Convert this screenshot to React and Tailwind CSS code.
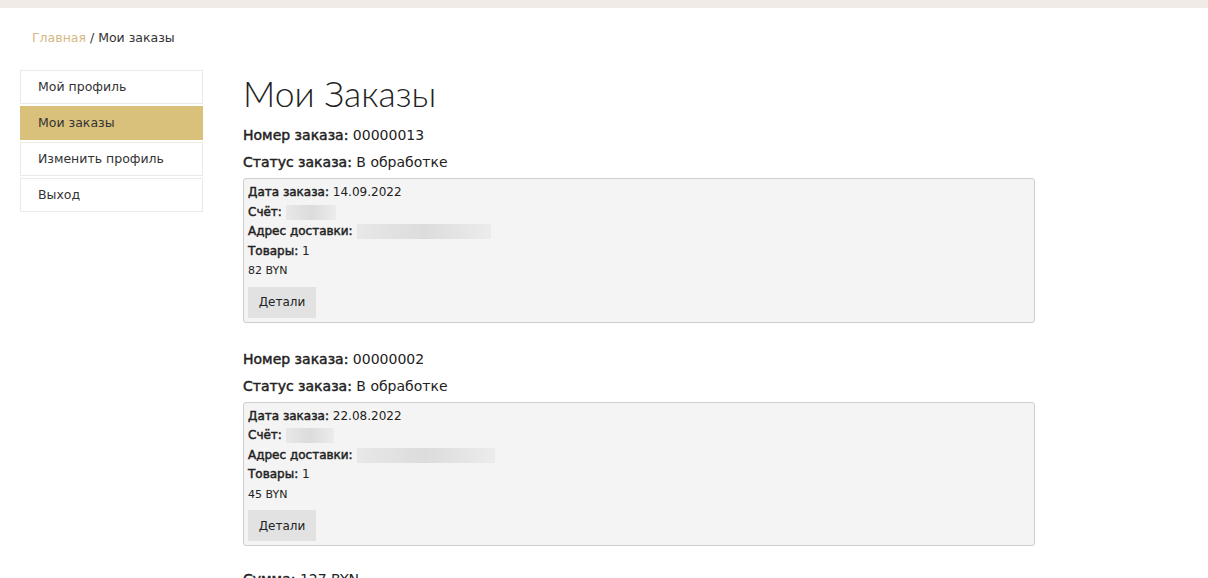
import React from 'react';

const font = { fontFamily: '"DejaVu Sans", "Noto Sans", sans-serif' };
const light = { fontFamily: '"Lato", "Noto Sans", sans-serif' };

const menu = [
  { label: 'Мой профиль' },
  { label: 'Мои заказы', active: true },
  { label: 'Изменить профиль' },
  { label: 'Выход' },
];

const orders = [
  { num: '00000013', date: '14.09.2022', total: '82 BYN', bill: 'w-[50px]', addr: 'w-[134px]' },
  { num: '00000002', date: '22.08.2022', total: '45 BYN', bill: 'w-[48px]', addr: 'w-[138px]' },
];

function Blur({ w }) {
  return (
    <span className={`inline-block h-[15px] align-middle ${w} bg-gradient-to-r from-[#e8e8e8] via-[#dcdcdc] to-[#ececec]`} />
  );
}

function Label({ children }) {
  return <span className="[-webkit-text-stroke:0.45px_#222]">{children}</span>;
}

function Order({ o }) {
  return (
    <div className="mb-[23px]">
      <div className="text-[14px] leading-[27px] text-[#222]">
        <Label>Номер заказа:</Label> {o.num}
      </div>
      <div className="text-[14px] leading-[27px] text-[#222]">
        <Label>Статус заказа:</Label> В обработке
      </div>
      <div className="mt-[2px] w-[792px] bg-[#f4f4f4] border border-[#cdcdcd] rounded-[3px] pl-[4px] pt-[4px] pb-[4px] text-[12px] text-[#222]">
        <div className="leading-[19.5px]"><Label>Дата заказа:</Label> {o.date}</div>
        <div className="leading-[19.5px]"><Label>Счёт:</Label> <Blur w={o.bill} /></div>
        <div className="leading-[19.5px]"><Label>Адрес доставки:</Label> <Blur w={o.addr} /></div>
        <div className="leading-[19.5px]"><Label>Товары:</Label> 1</div>
        <div className="leading-[19.5px] text-[11px]">{o.total}</div>
        <button className="mt-[6px] w-[68px] h-[31px] bg-[#e2e2e2] text-[12px] text-[#222]">Детали</button>
      </div>
    </div>
  );
}

export default function App() {
  return (
    <div className="min-h-screen bg-white" style={font}>
      <div className="h-2 bg-[#f0ebe7]" />
      <div className="pl-[32px] pt-[21px] text-[12.5px] leading-[18px] text-[#333]">
        <span className="text-[#d4b983]">Главная</span> / Мои заказы
      </div>
      <div className="flex pt-[23px]">
        <div className="ml-[20px] w-[183px] shrink-0 flex flex-col gap-[2px]">
          {menu.map((m) => (
            <div
              key={m.label}
              className={`h-[34px] flex items-center pl-[17px] text-[12.5px] text-[#333] border ${m.active ? 'bg-[#dac17b] border-[#dac17b]' : 'bg-white border-[#efe9e6]'}`}
            >
              {m.label}
            </div>
          ))}
        </div>
        <div className="ml-[40px] flex-1">
          <h1 className="text-[35.5px] font-light leading-[40px] mt-[4px] mb-[8px] text-[#222]" style={light}>Мои Заказы</h1>
          {orders.map((o) => (
            <Order key={o.num} o={o} />
          ))}
          <div className="mt-[4px] text-[14px] text-[#222]">
            <Label>Сумма:</Label> 127 BYN
          </div>
        </div>
      </div>
    </div>
  );
}
